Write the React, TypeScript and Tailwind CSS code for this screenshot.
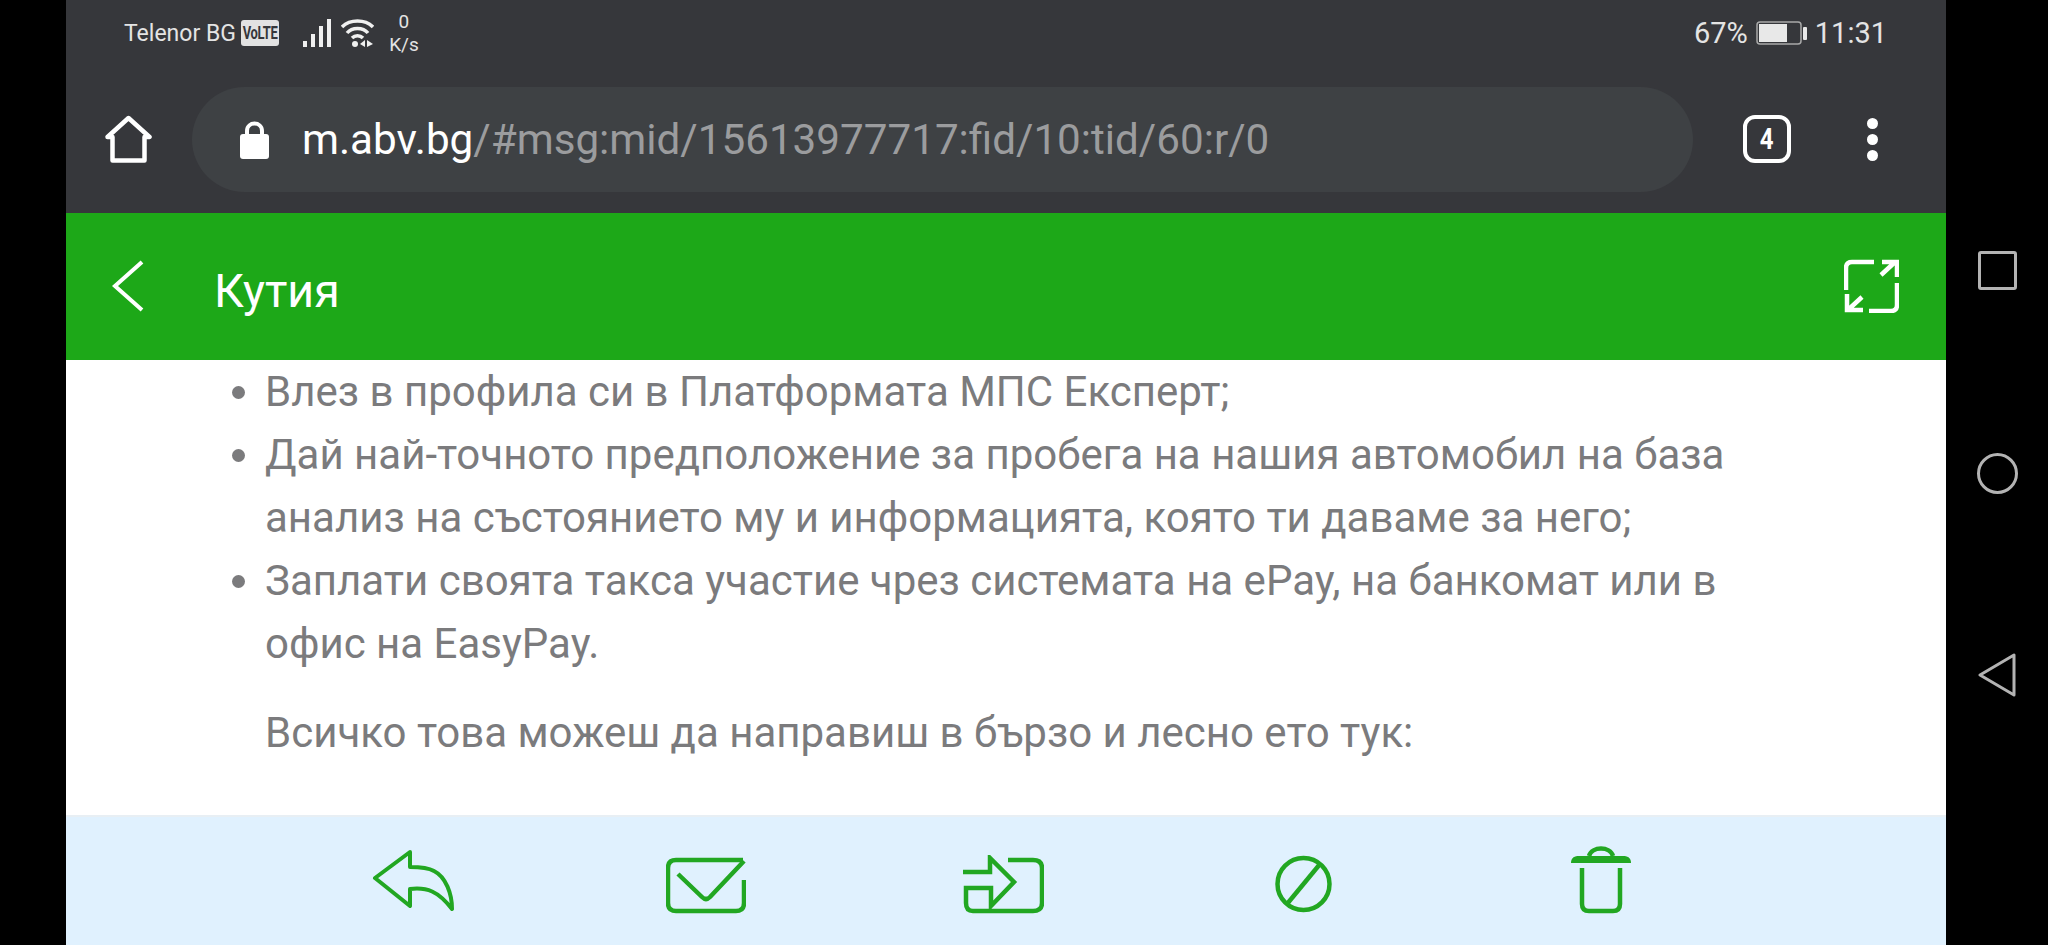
const StatusBar = () => (
  <div className="flex h-[66px] items-center pl-[58px] pr-[59px] text-[#e4e4e4]">
    <span className="text-[23px] leading-none">Telenor BG</span>
    <span className="ml-[5px] flex h-[26px] w-[38px] items-center justify-center rounded-[3px] bg-[#e2e2e2]">
      <span className="scale-x-[0.72] text-[18px] font-bold leading-none tracking-[-0.5px] text-[#36373b]">VoLTE</span>
    </span>
    <svg className="ml-[24px]" width="30" height="28" viewBox="0 0 30 28" fill="#f0f0f0">
      <rect x="0" y="22" width="4" height="6" />
      <rect x="8" y="15" width="4" height="13" />
      <rect x="16" y="7" width="4" height="21" />
      <rect x="24" y="0" width="4" height="28" />
    </svg>
    <svg className="ml-[8px]" width="33" height="28" viewBox="0 0 33 28" fill="none" stroke="#f0f0f0" strokeWidth="3.5">
      <path d="M1 8 C 9 0, 24 0, 32 8" />
      <path d="M6 14 C 11 8, 22 8, 27 14" />
      <path d="M11 19 C 14 16, 19 16, 22 19" />
      <circle cx="14" cy="25" r="3" fill="#f0f0f0" stroke="none" />
      <path d="M19 25 L24 21 V28 Z M26 21 L32 25 L26 28 Z" fill="#f0f0f0" stroke="none" />
    </svg>
    <div className="ml-[14px] flex w-[32px] flex-col items-center text-[19px] leading-[23px]">
      <span>0</span>
      <span>K/s</span>
    </div>
    <span className="ml-auto text-[29px] leading-none">67%</span>
    <svg className="ml-[8px]" width="51" height="24" viewBox="0 0 51 24" fill="none">
      <rect x="1" y="1" width="44" height="22" rx="3" stroke="#a9a9a9" strokeWidth="1.5" />
      <rect x="3" y="3" width="28" height="18" fill="#e8e8e8" />
      <rect x="47" y="6" width="4" height="13" rx="1" fill="#e8e8e8" />
    </svg>
    <span className="ml-[8px] text-[29px] leading-none">11:31</span>
  </div>
);

const BrowserBar = () => (
  <div className="flex h-[147px] items-start pl-[39px] pt-[21px]">
    <svg className="mt-[28px]" width="50" height="50" viewBox="0 0 50 50" fill="none" stroke="#fff" strokeWidth="4.5" strokeLinejoin="round">
      <path d="M2.5 22 L23.5 3 L44.5 22 H39.5 V45.5 H7.5 V22 Z" />
    </svg>
    <div className="ml-[37px] flex h-[105px] w-[1501px] items-center rounded-full bg-[#3e4144] pl-[48px]">
      <svg width="29" height="38" viewBox="0 0 29 38" fill="#fff">
        <path d="M7 15 V10 C7 0, 22 0, 22 10 V15" fill="none" stroke="#fff" strokeWidth="4" />
        <rect x="0" y="13" width="29" height="25" rx="3" />
      </svg>
      <div className="ml-[33px] mt-[2px] text-[42.2px] leading-none whitespace-nowrap">
        <span className="text-white">m.abv.bg</span>
        <span className="text-[#9b9c9e]">/#msg:mid/15613977717:fid/10:tid/60:r/0</span>
      </div>
    </div>
    <div className="ml-[50px] mt-[28px] flex h-[48px] w-[48px] items-center justify-center rounded-[12px] border-[4px] border-white">
      <span className="scale-x-[0.8] text-[30px] font-bold leading-none text-white">4</span>
    </div>
    <div className="ml-[76px] mt-[31px] flex flex-col gap-[5px]">
      <div className="h-[11px] w-[11px] rounded-full bg-white" />
      <div className="h-[11px] w-[11px] rounded-full bg-white" />
      <div className="h-[11px] w-[11px] rounded-full bg-white" />
    </div>
  </div>
);

const GreenHeader = () => (
  <div className="flex h-[147px] items-center bg-[#1da818] pl-[46px] pr-[47px] text-white">
    <svg className="-mt-[1px]" width="32" height="52" viewBox="0 0 32 52" fill="none" stroke="#fff" strokeWidth="4">
      <path d="M30 2 L3 26 L30 50" />
    </svg>
    <span className="ml-[70px] mt-[10px] text-[46.5px] leading-none">Кутия</span>
    <svg className="ml-auto -mt-[2px]" width="55" height="54" viewBox="0 0 55 54" fill="none" stroke="#fff" strokeWidth="4.5">
      <path d="M30 3 H8 Q2 3 2 9 V31" />
      <path d="M53 24 V46 Q53 52 47 52 H25" />
      <path d="M37 16 L50 4 M38 3 H53 V18" />
      <path d="M18 38 L5 50 M3 35 V51 H19" />
    </svg>
  </div>
);

const MailBody = () => (
  <div className="flex-1 overflow-hidden bg-white pl-[199px] pr-[166px] text-[42px] leading-[63px] text-[#7b7b7d]">
    <ul className="list-disc pl-0 marker:text-[#7b7b7d]">
      <li>Влез в профила си в Платформата МПС Експерт;</li>
      <li>
        Дай най-точното предположение за пробега на нашия автомобил на база анализ на състоянието му и информацията,
        която ти даваме за него;
      </li>
      <li>Заплати своята такса участие чрез системата на ePay, на банкомат или в офис на EasyPay.</li>
    </ul>
    <p className="mt-[26px]">Всичко това можеш да направиш в бързо и лесно ето тук:</p>
  </div>
);

const BottomToolbar = () => (
  <div className="flex h-[130px] items-start border-t-2 border-[#e8eff4] bg-[#e0f1fe] pl-[306px]">
    <svg className="mt-[32px]" width="84" height="62" viewBox="0 0 84 62" fill="none" stroke="#22a722" strokeWidth="4" strokeLinejoin="round">
      <path d="M38 3 L3 29 L38 57 V40 C55 38 66 42 80 60 C80 45 74 28 62 22 C55 18 46 18 38 18 Z" />
    </svg>
    <svg className="ml-[210px] mt-[40px]" width="80" height="57" viewBox="0 0 80 57" fill="none" stroke="#22a722" strokeWidth="4.5">
      <path d="M77 3 H10 Q2 3 2 11 V46 Q2 54 10 54 H70 Q78 54 78 46 V23" />
      <path d="M12 17 L36 40 Q40 44 44 40 L78 4" />
    </svg>
    <svg className="ml-[217px] mt-[38px]" width="81" height="59" viewBox="0 0 81 59" fill="none" stroke="#22a722" strokeWidth="4.5">
      <path d="M0 17 H27 V3 L51 27 L28 51 V33 H3 V48 Q3 56 10 56 H70 Q79 56 79 48 V13 Q79 5 70 5 H45" />
    </svg>
    <svg className="ml-[231px] mt-[38px]" width="57" height="58" viewBox="0 0 57 58" fill="none" stroke="#22a722" strokeWidth="4.5">
      <circle cx="28.5" cy="29" r="26" />
      <path d="M45 9 L12 49" />
    </svg>
    <svg className="ml-[237px] mt-[29px]" width="64" height="68" viewBox="0 0 64 68" fill="none" stroke="#22a722" strokeWidth="4.5">
      <path d="M20 10 C23 0, 41 0, 44 10" />
      <path d="M2 17 C2 11, 6 10, 10 10 H54 C58 10, 62 11, 62 17 Z" fill="#22a722" stroke="none" />
      <path d="M13 22 V58 Q13 65 20 65 H44 Q51 65 51 58 V22" />
    </svg>
  </div>
);

const AndroidNav = () => (
  <div className="flex w-[102px] flex-col items-center pt-[251px]">
    <div className="h-[39px] w-[39px] rounded-[3px] border-[3px] border-[#b3b3b3]" />
    <div className="mt-[163px] h-[41px] w-[41px] rounded-full border-[3px] border-[#b3b3b3]" />
    <svg className="mt-[159px]" width="38" height="44" viewBox="0 0 38 44" fill="none" stroke="#b3b3b3" strokeWidth="3" strokeLinejoin="round">
      <path d="M36 2 V42 L2 22 Z" />
    </svg>
  </div>
);

export default function App() {
  return (
    <div className="flex h-[945px] w-[2048px] overflow-hidden bg-black font-['Roboto',sans-serif]">
      <div className="ml-[66px] flex w-[1880px] flex-col">
        <div className="bg-[#36373b]">
          <StatusBar />
          <BrowserBar />
        </div>
        <GreenHeader />
        <MailBody />
        <BottomToolbar />
      </div>
      <AndroidNav />
    </div>
  );
}
